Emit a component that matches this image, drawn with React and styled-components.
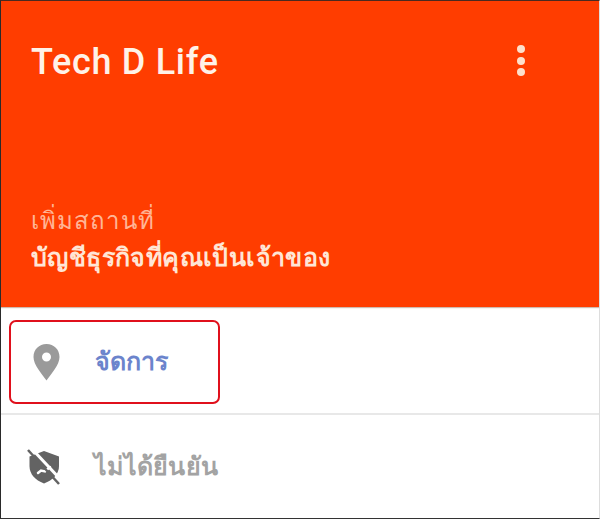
import React from "react";
import styled, { createGlobalStyle } from "styled-components";

const Global = createGlobalStyle`
  html, body { margin: 0; padding: 0; background: #fff; }
  body { font-family: Roboto, "Noto Sans", "Liberation Sans", sans-serif; }
`;
const Frame = styled.div`
  width: 600px; height: 519px; box-sizing: border-box; overflow: hidden;
  border-left: 1px solid #2a2a2a; border-top: 1px solid #4a2a20;
  border-bottom: 1px solid #333; border-right: 1px solid #ddd;
  display: flex; flex-direction: column; background: #fff;
`;
const Header = styled.header`
  height: 306px; flex: none; background: #ff3d00; box-sizing: border-box;
  padding: 40px 0 33px 30px; display: flex; flex-direction: column;
  box-shadow: 0 1px 1px rgba(120,60,30,.35);
`;
const TopRow = styled.div`
  display: flex; justify-content: space-between; align-items: flex-start;
  padding-right: 74px;
`;
const Title = styled.h1`
  margin: 0; font-size: 36px; line-height: 42px; font-weight: 500; color: #fff2e8; letter-spacing: .7px;
`;
const Menu = styled.div`
  display: flex; flex-direction: column; gap: 3.500px; margin-top: 4px;
`;
const Dot = styled.span`
  width: 8px; height: 8px; border-radius: 50%; background: #fde0cc;
`;
const Sub = styled.div`
  margin-top: auto; display: flex; flex-direction: column; gap: 6px;
`;
const Place = styled.div`
  font-size: 24px; line-height: 30px; color: #ffb596; letter-spacing: 1.100px; font-weight: 500;
`;
const Account = styled.div`
  font-size: 25px; line-height: 32px; font-weight: 700; color: #ffe6d6; letter-spacing: .4px;
`;
const Manage = styled.div`
  height: 108px; flex: none; box-sizing: border-box; padding: 13px 0 0 8px;
  border-bottom: 2px solid #e8e8e8;
`;
const Highlight = styled.div`
  width: 211px; height: 84px; box-sizing: border-box;
  border: 2px solid #e0101c; border-radius: 7px;
  display: flex; align-items: center; padding-left: 21px; gap: 34px;
`;
const Row = styled.div`
  display: flex; align-items: center; padding: 34px 0 0 25px; gap: 32px;
`;
const Label = styled.span`
  font-size: ${p => p.$s}px; line-height: 32px; font-weight: 600;
  letter-spacing: ${p => p.$ls}px; color: ${p => p.$c}; 
`;
const Pin = () => (
  <svg width="29" height="38" viewBox="0 0 29 38">
    <path fillRule="evenodd" fill="#9a9a9a" d="M14.500 1C7 1 1.500 6.500 1.500 14C1.500 22 10 31 14.500 37.500C19 31 27.500 22 27.500 14C27.500 6.500 22 1 14.500 1ZM14.500 9.500A4.500 4.500 0 1 1 14.500 18.500A4.500 4.500 0 0 1 14.500 9.500Z" />
  </svg>
);
const ShieldOff = () => (
  <svg width="36" height="36" viewBox="0 0 36 36">
    <path fill="#636363" d="M18 2L33 7.500V17C33 25 27 31 18 34.500C9 31 3.500 25 3.500 17V7.500Z" />
    <path stroke="#fff" strokeWidth="2.500" strokeLinecap="round" fill="none" d="M12 24L15 21.500L19 22.500L24 18" />
    <path stroke="#fff" strokeWidth="3" fill="none" d="M6 0L36 32" />
    <path stroke="#636363" strokeWidth="2.500" fill="none" d="M2 1L33 35" />
  </svg>
);
export default function App() {
  return (
    <Frame>
      <Global />
      <Header>
        <TopRow>
          <Title>Tech D Life</Title>
          <Menu><Dot /><Dot /><Dot /></Menu>
        </TopRow>
        <Sub>
          <Place>เพิ่มสถานที่</Place>
          <Account>บัญชีธุรกิจที่คุณเป็นเจ้าของ</Account>
        </Sub>
      </Header>
      <Manage>
        <Highlight>
          <Pin />
          <Label $c="#6b84cc" $s={25} $ls={0}>จัดการ</Label>
        </Highlight>
      </Manage>
      <Row>
        <ShieldOff />
        <Label $c="#a3a3a3" $s={25} $ls={0.3}>ไม่ได้ยืนยัน</Label>
      </Row>
    </Frame>
  );
}
